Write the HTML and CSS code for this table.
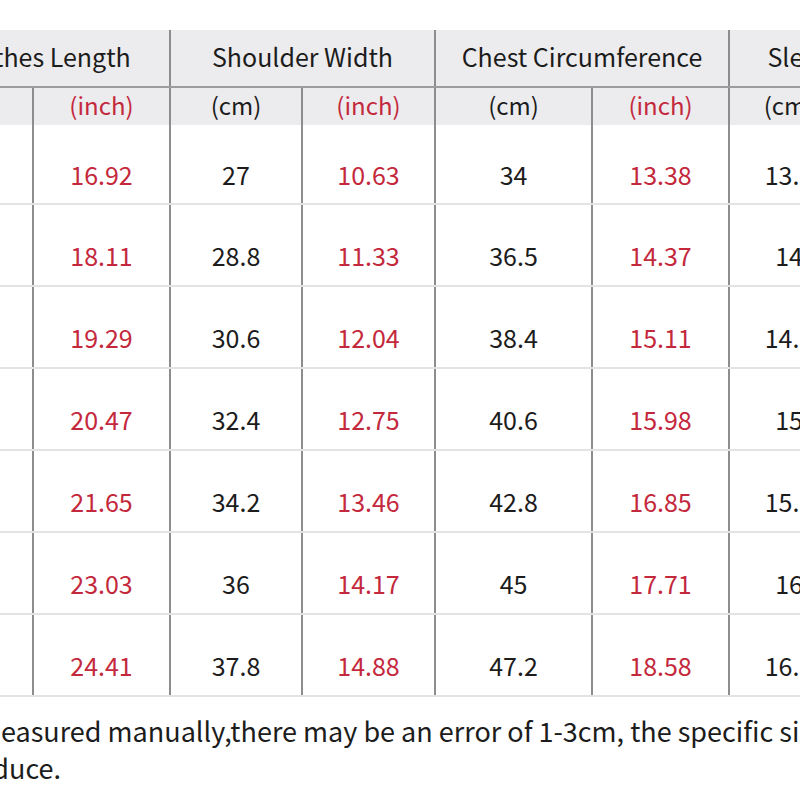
FILE: index.html
```html
<!DOCTYPE html>
<html lang="en">
<head>
<meta charset="utf-8">
<title>Size Chart</title>
<link rel="stylesheet" href="styles.css">
</head>
<body>
<div class="page">
  <table class="chart">
    <colgroup>
      <col class="c-a"><col class="c-b"><col class="c-c"><col class="c-d"><col class="c-e"><col class="c-f"><col class="c-g"><col class="c-h">
    </colgroup>
    <thead>
      <tr class="group-row">
        <th colspan="2">Clothes Length</th>
        <th colspan="2">Shoulder Width</th>
        <th colspan="2">Chest Circumference</th>
        <th colspan="2">Sleeve Length</th>
      </tr>
      <tr class="unit-row">
        <th>(cm)</th><th class="red">(inch)</th>
        <th>(cm)</th><th class="red">(inch)</th>
        <th>(cm)</th><th class="red">(inch)</th>
        <th>(cm)</th><th class="red">(inch)</th>
      </tr>
    </thead>
    <tbody>
      <tr><td>43</td><td class="red">16.92</td><td>27</td><td class="red">10.63</td><td>34</td><td class="red">13.38</td><td>13.5</td><td class="red">5.31</td></tr>
      <tr><td>46</td><td class="red">18.11</td><td>28.8</td><td class="red">11.33</td><td>36.5</td><td class="red">14.37</td><td>14</td><td class="red">5.51</td></tr>
      <tr><td>49</td><td class="red">19.29</td><td>30.6</td><td class="red">12.04</td><td>38.4</td><td class="red">15.11</td><td>14.5</td><td class="red">5.71</td></tr>
      <tr><td>52</td><td class="red">20.47</td><td>32.4</td><td class="red">12.75</td><td>40.6</td><td class="red">15.98</td><td>15</td><td class="red">5.91</td></tr>
      <tr><td>55</td><td class="red">21.65</td><td>34.2</td><td class="red">13.46</td><td>42.8</td><td class="red">16.85</td><td>15.5</td><td class="red">6.10</td></tr>
      <tr><td>58.5</td><td class="red">23.03</td><td>36</td><td class="red">14.17</td><td>45</td><td class="red">17.71</td><td>16</td><td class="red">6.30</td></tr>
      <tr><td>62</td><td class="red">24.41</td><td>37.8</td><td class="red">14.88</td><td>47.2</td><td class="red">18.58</td><td>16.5</td><td class="red">6.50</td></tr>
    </tbody>
  </table>
  <div class="note">
    <p class="note-line">Measured manually,there may be an error of 1-3cm, the specific size please refer to the actual</p>
    <p class="note-line note-cont">produce.</p>
  </div>
</div>
</body>
</html>
```

FILE: styles.css
```css
html, body {
  margin: 0;
  padding: 0;
  background: #ffffff;
}

body {
  width: 800px;
  height: 800px;
  overflow: hidden;
  font-family: "Noto Sans CJK SC", "Noto Sans", sans-serif;
  color: #1c1c1c;
}

.page {
  padding-top: 30px;
  width: 800px;
  overflow: hidden;
}

.chart {
  margin-left: -84px;
  border-collapse: collapse;
  table-layout: fixed;
  width: 1052px;
}

.c-a { width: 116px; }
.c-b { width: 137px; }
.c-c { width: 132px; }
.c-d { width: 133px; }
.c-e { width: 157px; }
.c-f { width: 137px; }
.c-g { width: 120px; }
.c-h { width: 120px; }

.chart th,
.chart td {
  padding: 0;
  text-align: center;
  white-space: nowrap;
  border-left: 2px solid #8d8d8d;
  border-right: 2px solid #8d8d8d;
}

.group-row th {
  height: 51px;
  background: #ececee;
  font-size: 25px;
  font-weight: 400;
  border-bottom: 2px solid #9c9c9c;
  vertical-align: middle;
  padding-bottom: 5px;
}

.unit-row th {
  height: 37px;
  background: #ececee;
  font-size: 24px;
  font-weight: 400;
  vertical-align: top;
  padding-top: 0;
  line-height: 34px;
}

.chart td {
  height: 82px;
  box-sizing: border-box;
  padding-top: 19px;
  font-size: 25px;
  border-bottom: 2px solid #e3e3e3;
  vertical-align: middle;
}

.chart tbody tr:first-child td {
  height: 79px;
  padding-top: 19px;
}

.red {
  color: #c4283c;
}

.note {
  margin-top: 15px;
  margin-left: -21px;
  font-size: 27px;
  line-height: 37px;
  color: #1c1c1c;
}

.note-line {
  margin: 0;
  white-space: nowrap;
}

.note-cont {
  text-indent: -30px;
}
```
